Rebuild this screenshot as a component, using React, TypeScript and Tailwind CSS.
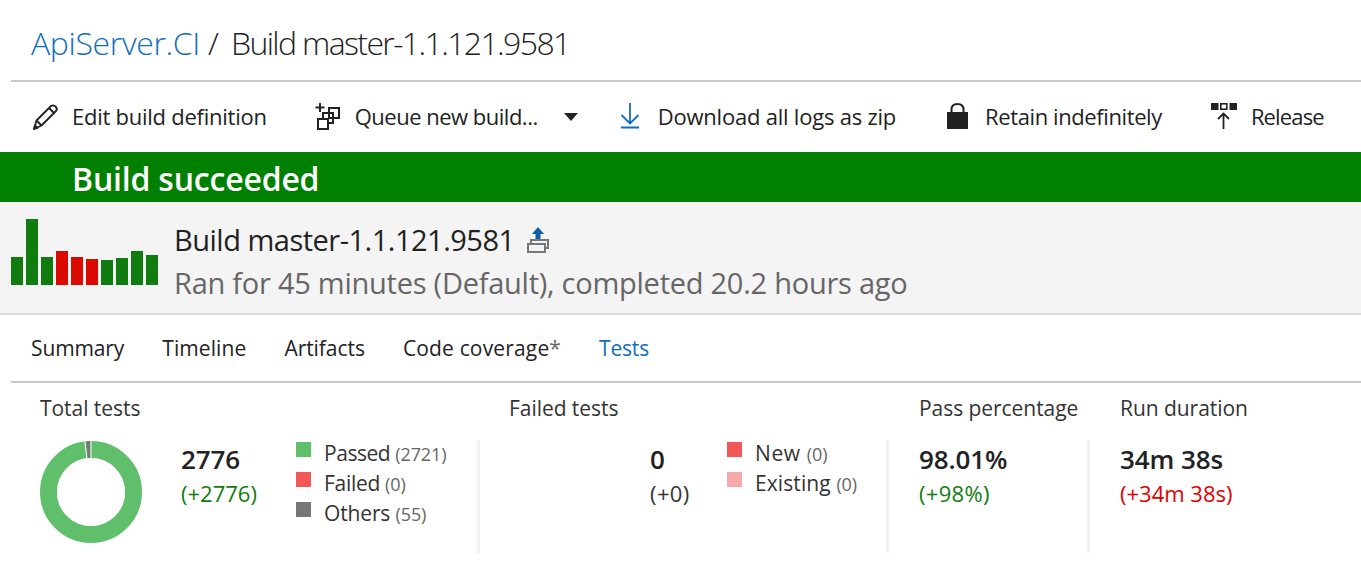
const FONT = "font-['Open_Sans','Noto_Sans',sans-serif]";

function Pencil() {
  return (
    <svg width="28" height="28" viewBox="0 0 28 28" fill="none" stroke="#222" strokeWidth="1.8" strokeLinejoin="round">
      <path d="M3 26 L5.5 17.5 L20 3 Q22 1.5 24.5 3.5 Q27 6 25 8 L10.5 22.5 Z" />
      <path d="M5.5 17.5 L10.5 22.5 M18 5 L23 10 M3 26 L4 22.5 L6.5 25 Z" />
    </svg>
  );
}
function Queue() {
  return (
    <svg width="28" height="28" viewBox="0 0 28 28" fill="none" stroke="#222" strokeWidth="2">
      <path d="M5 0 V9 M0.5 4.5 H9.5" />
      <rect x="14" y="5" width="10" height="10" />
      <rect x="8" y="10" width="10" height="10" />
      <rect x="3" y="16" width="10" height="10" fill="#fff" />
    </svg>
  );
}
function DownloadIcon() {
  return (
    <svg width="24" height="30" viewBox="0 0 24 30" fill="none" stroke="#106ebe" strokeWidth="1.8">
      <path d="M12 1 V21 M3.5 13 L12 21.5 L20.5 13 M3 25.5 H21" />
    </svg>
  );
}
function Lock() {
  return (
    <svg width="24" height="28" viewBox="0 0 24 28">
      <rect x="2" y="9" width="21" height="17" fill="#222" />
      <path d="M6.5 10 V6.5 Q6.5 1 12.5 1 Q18.5 1 18.5 6.5 V10" fill="none" stroke="#222" strokeWidth="2" />
    </svg>
  );
}
function ReleaseIcon() {
  return (
    <svg width="28" height="28" viewBox="0 0 28 28">
      <rect x="1" y="0" width="7.5" height="7" fill="#222" />
      <rect x="10.8" y="0.8" width="6" height="5.4" fill="none" stroke="#222" strokeWidth="1.6" />
      <rect x="19.5" y="0" width="7.5" height="7" fill="#222" />
      <path d="M13.5 26 V10.5 M8 16 L13.5 10.5 L19 16" fill="none" stroke="#222" strokeWidth="1.8" />
    </svg>
  );
}
function Publish() {
  return (
    <svg width="24" height="30" viewBox="0 0 24 30">
      <path d="M12 2 L18 9 H14.5 V14 H9.5 V9 H6 Z" fill="#0f5ea8" />
      <rect x="5" y="15" width="17" height="8" fill="#f4f4f4" stroke="#777" strokeWidth="2" />
      <rect x="2" y="19" width="17" height="8" fill="#f4f4f4" stroke="#777" strokeWidth="2" />
    </svg>
  );
}
function Donut() {
  const c = 2 * Math.PI * 42.5;
  return (
    <svg width="102" height="102" viewBox="0 0 102 102" className="mt-px shrink-0">
      <circle cx="51" cy="51" r="42.5" fill="none" stroke="#5fbf6a" strokeWidth="17" />
      <circle
        cx="51" cy="51" r="42.5" fill="none" stroke="#777" strokeWidth="17"
        strokeDasharray={`${c * 0.014} ${c}`}
        transform={`rotate(${-90 - 5.5} 51 51)`}
      />
      <path d="M51 51 V0" stroke="#fff" strokeWidth="1" />
      <path d="M51 51 L44.8 0" stroke="#fff" strokeWidth="1" />
      <circle cx="51" cy="51" r="34" fill="#fff" />
    </svg>
  );
}

const bars = [
  [28, "bg-[#107c10]"],
  [66, "bg-[#107c10]"],
  [28, "bg-[#107c10]"],
  [34, "bg-[#da0a00]"],
  [28, "bg-[#da0a00]"],
  [26, "bg-[#da0a00]"],
  [25, "bg-[#107c10]"],
  [27, "bg-[#107c10]"],
  [34, "bg-[#107c10]"],
  [30, "bg-[#107c10]"],
] as const;

function ToolItem({ icon, label, iconW, gap, track }: { icon: React.ReactNode; label: string; iconW: string; gap: string; track: string }) {
  return (
    <div className="flex items-center">
      <span className={`flex justify-center ${iconW} ${gap}`}>{icon}</span>
      <span className={`relative -top-px text-[22px] text-[#222] ${track}`}>{label}</span>
    </div>
  );
}

function Legend({ color, label, count, track }: { color: string; label: string; count: string; track: string }) {
  return (
    <div className="flex h-[30px] items-start">
      <span className="mt-0.5 mr-[13px] flex">
        <span className={`h-[15px] w-[15px] ${color}`} />
      </span>
      <span className={`relative -top-[2px] text-[21px] leading-[30px] text-[#333] ${track}`}>
        {label} <span className="text-[18px] tracking-[-0.1px] text-[#666]">{count}</span>
      </span>
    </div>
  );
}

function Big({ value, delta, color }: { value: string; delta: string; color: string }) {
  return (
    <div>
      <div className="-mt-[2px] text-[26px] font-semibold leading-[41px] tracking-[-0.1px] text-[#222]">{value}</div>
      <div className={`text-[22px] leading-[26px] ${color}`}>{delta}</div>
    </div>
  );
}

const title = "h-[49px] text-[21px] leading-[34px] tracking-[-0.05px] text-[#333]";

export default function App() {
  return (
    <div className={`h-[563px] w-[1361px] overflow-hidden bg-white ${FONT}`}>
      <div className="ml-[11px] flex h-[82px] items-start border-b-2 border-[#c8c8c8] pl-5 pt-[21px]">
        <h1 className="text-[32px] font-light leading-[44px] text-[#222]">
          <span className="tracking-[-0.35px] text-[#106ebe]">ApiServer.CI</span>
          <span className="ml-[8px] mr-[12px]">/</span>
          <span className="tracking-[-1.62px]">Build master-1.1.121.9581</span>
        </h1>
      </div>

      <div className="flex h-[70px] items-center pl-[31px]">
        <ToolItem icon={<Pencil />} label="Edit build definition" iconW="w-[28px]" gap="mr-[13px]" track="tracking-[-0.25px]" />
        <div className="ml-[48px] flex items-center">
          <ToolItem icon={<Queue />} label="Queue new build..." iconW="w-[28px]" gap="mr-[12px]" track="tracking-[-0.5px]" />
          <span className="ml-[26px] h-0 w-0 border-x-[7px] border-t-[8px] border-x-transparent border-t-[#222]" />
        </div>
        <div className="ml-[40px]">
          <ToolItem icon={<DownloadIcon />} label="Download all logs as zip" iconW="w-[24px]" gap="mr-[16px]" track="tracking-[-0.22px]" />
        </div>
        <div className="ml-[49px]">
          <ToolItem icon={<Lock />} label="Retain indefinitely" iconW="w-[24px]" gap="mr-[16px]" track="tracking-[-0.4px]" />
        </div>
        <div className="ml-[48px]">
          <ToolItem icon={<ReleaseIcon />} label="Release" iconW="w-[28px]" gap="mr-[13px]" track="tracking-[-0.85px]" />
        </div>
      </div>

      <div className="flex h-[50px] items-center bg-[#008000] pl-[72px] pt-[4px]">
        <span className="text-[32px] font-semibold tracking-[-0.2px] text-white">Build succeeded</span>
      </div>

      <div className="flex h-[113px] border-b-2 border-[#dcdcdc] bg-[#f4f4f4] pl-[11px]">
        <div className="mt-[17px] flex h-[66px] w-[164px] shrink-0 items-end gap-[3px]">
          {bars.map(([h, c], i) => (
            <div key={i} className={`w-[12px] ${c}`} style={{ height: h }} />
          ))}
        </div>
        <div className="-ml-px pt-[16px]">
          <div className="flex items-center">
            <span className="text-[29px] leading-[44px] tracking-[-0.5px] text-[#222]">Build master-1.1.121.9581</span>
            <span className="ml-[11px]"><Publish /></span>
          </div>
          <div className="-mt-px text-[29px] leading-[43px] tracking-[-0.25px] text-[#666]">
            Ran for 45 minutes (Default), completed 20.2 hours ago
          </div>
        </div>
      </div>

      <div className="ml-[11px] flex h-[68px] items-center gap-[38px] border-b-2 border-[#c8c8c8] pl-5 pt-[2px] text-[21px] text-[#222]">
        <span className="tracking-[-0.12px]">Summary</span>
        <span className="tracking-[0.1px]">Timeline</span>
        <span className="tracking-[-0.05px]">Artifacts</span>
        <span className="tracking-[0.16px]">Code coverage<span className="text-[#666]">*</span></span>
        <span className="tracking-[-0.2px] text-[#106ebe]">Tests</span>
      </div>

      <div className="flex pt-[8px]">
        <div className="w-[480px] pl-[40px]">
          <div className={title}>Total tests</div>
          <div className="flex h-[113px] border-r-[3px] border-[#f2f2f2]">
            <Donut />
            <div className="ml-[39px] mt-[1px] w-[115px]">
              <Big value="2776" delta="(+2776)" color="text-[#107c10]" />
            </div>
            <div>
              <Legend color="bg-[#5fbf6a]" label="Passed" count="(2721)" track="tracking-[-0.45px]" />
              <Legend color="bg-[#f25757]" label="Failed" count="(0)" track="tracking-[-0.3px]" />
              <Legend color="bg-[#777]" label="Others" count="(55)" track="tracking-[-0.15px]" />
            </div>
          </div>
        </div>

        <div className="w-[409px]">
          <div className={`${title} pl-[29px]`}>Failed tests</div>
          <div className="flex h-[113px] border-r-[3px] border-[#f2f2f2] pl-[170px]">
            <div className="mt-[1px] w-[77px]">
              <Big value="0" delta="(+0)" color="text-[#333] tracking-[0.4px]" />
            </div>
            <div>
              <Legend color="bg-[#f25757]" label="New" count="(0)" track="tracking-[0.6px]" />
              <Legend color="bg-[#f7a8a8]" label="Existing" count="(0)" track="tracking-[0.1px]" />
            </div>
          </div>
        </div>

        <div className="w-[201px]">
          <div className={`${title} pl-[30px]`}>Pass percentage</div>
          <div className="h-[113px] border-r-[3px] border-[#f2f2f2] pl-[30px] pt-[1px]">
            <Big value="98.01%" delta="(+98%)" color="text-[#107c10] tracking-[0.3px]" />
          </div>
        </div>

        <div className="flex-1">
          <div className={`${title} pl-[30px]`}>Run duration</div>
          <div className="pl-[30px] pt-[1px]">
            <Big value="34m 38s" delta="(+34m 38s)" color="text-[#e00000]" />
          </div>
        </div>
      </div>
    </div>
  );
}
